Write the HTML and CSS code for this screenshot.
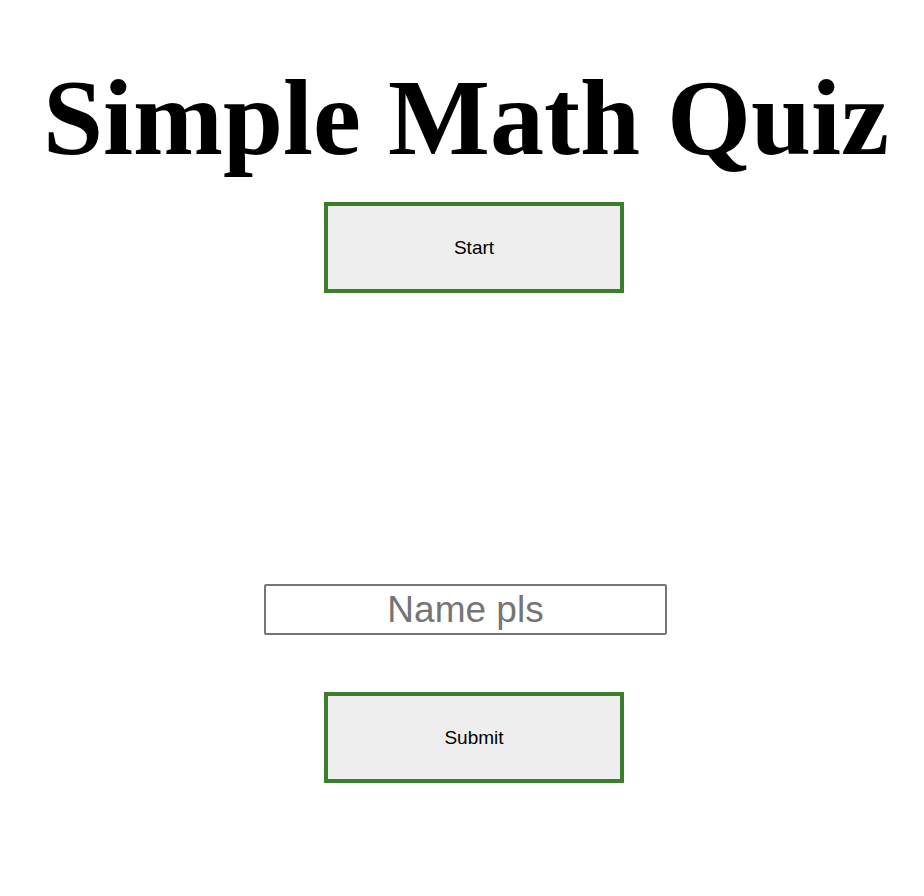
FILE: index.html
```html
<!DOCTYPE html>
<html>
<head>
<meta charset="utf-8">
<title>Simple Math Quiz</title>
<link rel="stylesheet" href="styles.css">
</head>
<body>
<main class="quiz">
  <h1 class="title">Simple Math Quiz</h1>
  <button class="btn btn-start" type="button">Start</button>
  <input class="name" type="text" placeholder="Name pls">
  <button class="btn btn-submit" type="button">Submit</button>
</main>
</body>
</html>
```
FILE: styles.css
```css
html, body {
  background: #ffffff;
}
body {
  margin: 8px;
}
.quiz {
  display: flex;
  flex-direction: column;
  align-items: center;
}
.title {
  font-family: "Liberation Serif", "Times New Roman", serif;
  font-weight: bold;
  font-size: 108px;
  line-height: 124px;
  margin: 48px 0 22px;
  color: #000;
  white-space: nowrap;
  transform: translateX(4px);
}
.btn {
  box-sizing: border-box;
  width: 300px;
  height: 91px;
  border: 4px solid #3b7d2a;
  background: #eeeeee;
  font-family: "Liberation Sans", Arial, sans-serif;
  font-size: 19px;
  color: #000;
  margin-left: 24px;
  padding: 1px 0 0;
}
.name {
  box-sizing: border-box;
  width: 403px;
  height: 51px;
  margin: 291px 0 57px 7px;
  border: 2px solid #767676;
  border-radius: 2px;
  font-family: "Liberation Sans", Arial, sans-serif;
  font-size: 37px;
  text-align: center;
  padding: 0;
}
.name::placeholder {
  color: #757575;
}
```
